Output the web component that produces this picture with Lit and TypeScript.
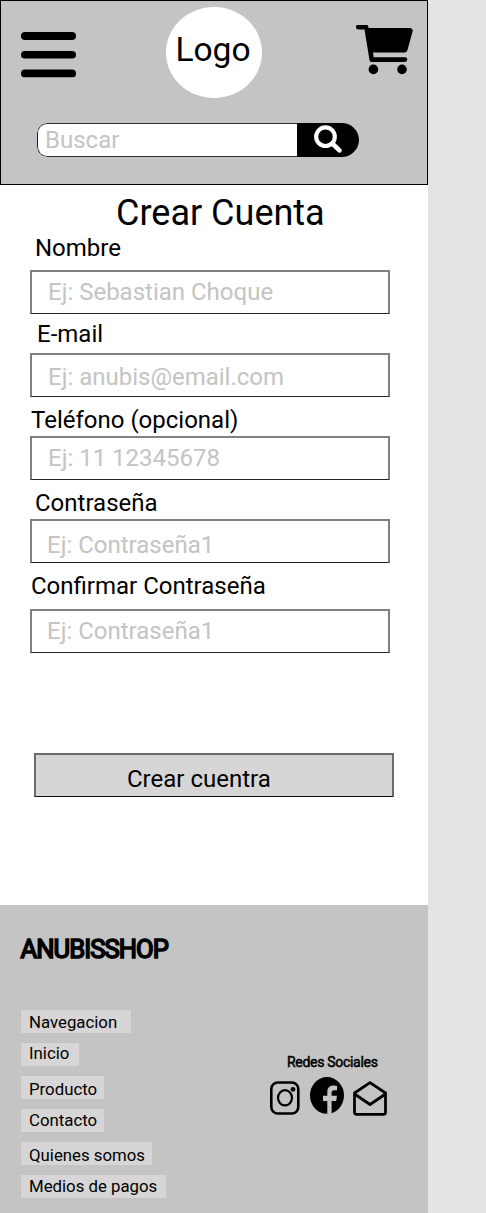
import { LitElement, html, css } from "lit";
import { customElement } from "lit/decorators.js";

interface Field {
  label: string;
  placeholder: string;
  key: string;
}

const FIELDS: Field[] = [
  { key: "nombre", label: "Nombre", placeholder: "Ej: Sebastian Choque" },
  { key: "email", label: "E-mail", placeholder: "Ej: anubis@email.com" },
  { key: "telefono", label: "Teléfono (opcional)", placeholder: "Ej: 11 12345678" },
  { key: "clave", label: "Contraseña", placeholder: "Ej: Contraseña1" },
  { key: "confirmar", label: "Confirmar Contraseña", placeholder: "Ej: Contraseña1" },
];

const LINKS = [
  { key: "navegacion", text: "Navegacion" },
  { key: "inicio", text: "Inicio" },
  { key: "producto", text: "Producto" },
  { key: "contacto", text: "Contacto" },
  { key: "quienes", text: "Quienes somos" },
  { key: "medios", text: "Medios de pagos" },
];

@customElement("shop-header")
class ShopHeader extends LitElement {
  static styles = css`
    :host { display: block; }
    .header { box-sizing: border-box; height: 185px; background: #c4c4c4; border: 1px solid #000; }
    .top { display: flex; align-items: flex-start; height: 122px; }
    .menu { margin: 31px 0 0 20px; }
    .logo {
      box-sizing: border-box; width: 96px; height: 91px; margin: 6px 0 0 90px; padding-right: 2px; border-radius: 50%; background: #fff;
      display: flex; justify-content: center; font-size: 33.6px; line-height: 85px; white-space: nowrap;
    }
    .cart { margin: 24px 0 0 94px; }
    .menu, .cart, .lens { display: block; flex: none; }
    .search {
      display: flex; box-sizing: border-box; width: 322px; height: 34px; margin-left: 36px;
      border-radius: 10px 17px 17px 10px; background: #fff; overflow: hidden;
    }
    .query {
      width: 260px; padding-left: 7px; box-sizing: border-box; color: #c4c4c4; font-size: 24px; line-height: 33px;
      border: solid; border-width: 1.5px 0 1.5px 1px; border-color: #333 #222; border-radius: 10px 0 0 10px;
    }
    .go { flex: 1; background: #000; display: flex; }
    .lens { margin: 2px 0 0 17px; }
  `;
  render() {
    return html`<header class="header">
      <div class="top">
        <svg class="menu" width="55" height="46" viewBox="0 0 55 46">
          <rect width="55" height="8" rx="4" />
          <rect y="19" width="55" height="7.5" rx="3.75" />
          <rect y="37.5" width="55" height="7.8" rx="3.9" />
        </svg>
        <div class="logo">Logo</div>
        <svg class="cart" width="58" height="51" viewBox="0 0 58 51">
          <path d="M2.5 -.5H10Q11.8 -.5 12.2 1.5L12.6 2.9H54Q57.5 3.2 56.5 6.7L51.5 25Q50.8 27.5 48.5 27.5H17L17.6 32.3H49A2.3 2.3 0 0 1 49 36.9H15.5Q13.8 36.9 13.5 35.3L8.5 4.5H2.5A2.5 2.5 0 0 1 2.5 -.5Z" />
          <circle cx="17.4" cy="44.4" r="4.8" /><circle cx="46" cy="44.4" r="4.8" />
        </svg>
      </div>
      <div class="search">
        <div class="query">Buscar</div>
        <div class="go">
          <svg class="lens" width="28" height="28" viewBox="0 0 28 28" fill="none" stroke="#fff">
            <circle cx="11.5" cy="11.7" r="9.3" stroke-width="4.2" />
            <path d="M18.3 18.5L25.4 25.4" stroke-width="4.6" stroke-linecap="round" />
          </svg>
        </div>
      </div>
    </header>`;
  }
}

@customElement("shop-form")
class ShopForm extends LitElement {
  static styles = css`
    :host { display: block; height: 720px; font-size: 24px; line-height: 28px; white-space: nowrap; }
    .title { margin: 0; padding: 7px 0 0 116px; font-size: 36px; line-height: 43px; font-weight: 400; height: 42px; }
    .field { display: flex; flex-direction: column; padding-left: 30px; }
    .box {
      box-sizing: border-box; width: 360px; height: 44px; padding: 6px 0 0 16px; color: #c4c4c4;
      border: solid; border-width: 2px 2px 1px; border-color: #808080 #808080 #222;
    }
    .nombre .label { padding-left: 5px; }
    .nombre .box { margin-top: 8px; }
    .email { margin-top: 6px; }
    .email .label { padding-left: 7px; }
    .email .box { margin-top: 5px; padding-top: 8px; }
    .telefono { margin-top: 9px; }
    .telefono .label, .confirmar .label { padding-left: 1px; }
    .telefono .box { margin-top: 2px; }
    .clave { margin-top: 9px; }
    .clave .label { padding-left: 5px; }
    .clave .box { margin-top: 2px; padding: 10px 0 0 15px; }
    .confirmar { margin-top: 9px; }
    .confirmar .box { margin-top: 9px; padding-left: 15px; }
    .submit {
      box-sizing: border-box; width: 360px; height: 44px; margin: 100px 0 0 34px; padding: 10px 0 0 91px;
      background: #d7d5d6; border: solid; border-width: 2px 2px 1px; border-color: #6c6b6c #6c6b6c #111;
    }
  `;
  render() {
    return html`
      <h1 class="title">Crear Cuenta</h1>
      ${FIELDS.map((f) => html`<div class="field ${f.key}">
        <div class="label">${f.label}</div>
        <div class="box">${f.placeholder}</div>
      </div>`)}
      <div class="submit">Crear cuentra</div>
    `;
  }
}

@customElement("shop-footer")
class ShopFooter extends LitElement {
  static styles = css`
    :host { display: block; height: 308px; background: #c4c4c4; white-space: nowrap; }
    .brand { padding: 30px 0 0 20.5px; height: 75px; font-size: 25.6px; line-height: 28px; letter-spacing: -0.95px; -webkit-text-stroke: 1.6px #000; }
    .columns { display: flex; align-items: flex-start; }
    .links { display: flex; flex-direction: column; gap: 10px; padding-left: 21px; width: 248px; }
    .link { box-sizing: border-box; height: 23px; padding-left: 8px; background: #d7d5d6; font-size: 16.8px; line-height: 24px; }
    .navegacion { width: 110px; }
    .inicio { width: 58px; line-height: 20px; }
    .producto { width: 83px; line-height: 26px; }
    .contacto { width: 83px; line-height: 22px; }
    .quienes { width: 131px; line-height: 26px; }
    .medios { width: 145px; line-height: 22px; }
    .social { padding-top: 42px; }
    .caption { padding-left: 18px; font-size: 14px; line-height: 20px; letter-spacing: -0.3px; -webkit-text-stroke: 0.5px #000; }
    .icons { display: flex; padding-top: 5px; }
    .icon { display: block; }
    .instagram { margin-top: 4px; }
    .facebook { margin-left: 10px; }
    .mail { margin: 4px 0 0 9px; }
  `;
  render() {
    return html`
      <div class="brand">ANUBISSHOP</div>
      <div class="columns">
        <nav class="links">
          ${LINKS.map((l) => html`<a class="link ${l.key}">${l.text}</a>`)}
        </nav>
        <div class="social">
          <div class="caption">Redes Sociales</div>
          <div class="icons">
            <svg class="icon instagram" width="31" height="34" viewBox="0 0 31 34" fill="none" stroke="#000">
              <rect x="2.3" y="1.5" width="27" height="31" rx="6.5" stroke-width="2.6" />
              <ellipse cx="16" cy="16.8" rx="7" ry="7.6" stroke-width="2.2" />
              <circle cx="24" cy="8.3" r="2.4" fill="#000" stroke="none" />
            </svg>
            <svg class="icon facebook" width="34" height="37" viewBox="0 0 34 37">
              <ellipse cx="17" cy="18.4" rx="17" ry="18.4" />
              <path d="M17.3 37V24H13V18.7H17.3V15.2C17.3 10.8 19.6 8.6 23.8 8.6Q25.8 8.6 27 8.9V13.3H24.4C22.3 13.3 21.6 14.3 21.6 16V18.7H27L26.2 24H21.6V37Z" fill="#c4c4c4" />
            </svg>
            <svg class="icon mail" width="34" height="35" viewBox="0 0 34 35" fill="none" stroke="#000" stroke-width="2.8" stroke-linejoin="round">
              <path d="M1.5 12L17 1.7L32.5 12V31.2Q32.5 33.4 30.4 33.4H3.6Q1.5 33.4 1.5 31.2Z" />
              <path d="M1.5 13L17 23.5L32.5 13" />
            </svg>
          </div>
        </div>
      </div>
    `;
  }
}

@customElement("app-root")
class AppRoot extends LitElement {
  static styles = css`
    :host { display: block; height: 1213px; overflow: hidden; background: #e4e4e4; color: #000; font-family: Roboto, sans-serif; }
    .screen { width: 428px; background: #fff; }
  `;
  render() {
    return html`<main class="screen">
      <shop-header></shop-header>
      <shop-form></shop-form>
      <shop-footer></shop-footer>
    </main>`;
  }
}
